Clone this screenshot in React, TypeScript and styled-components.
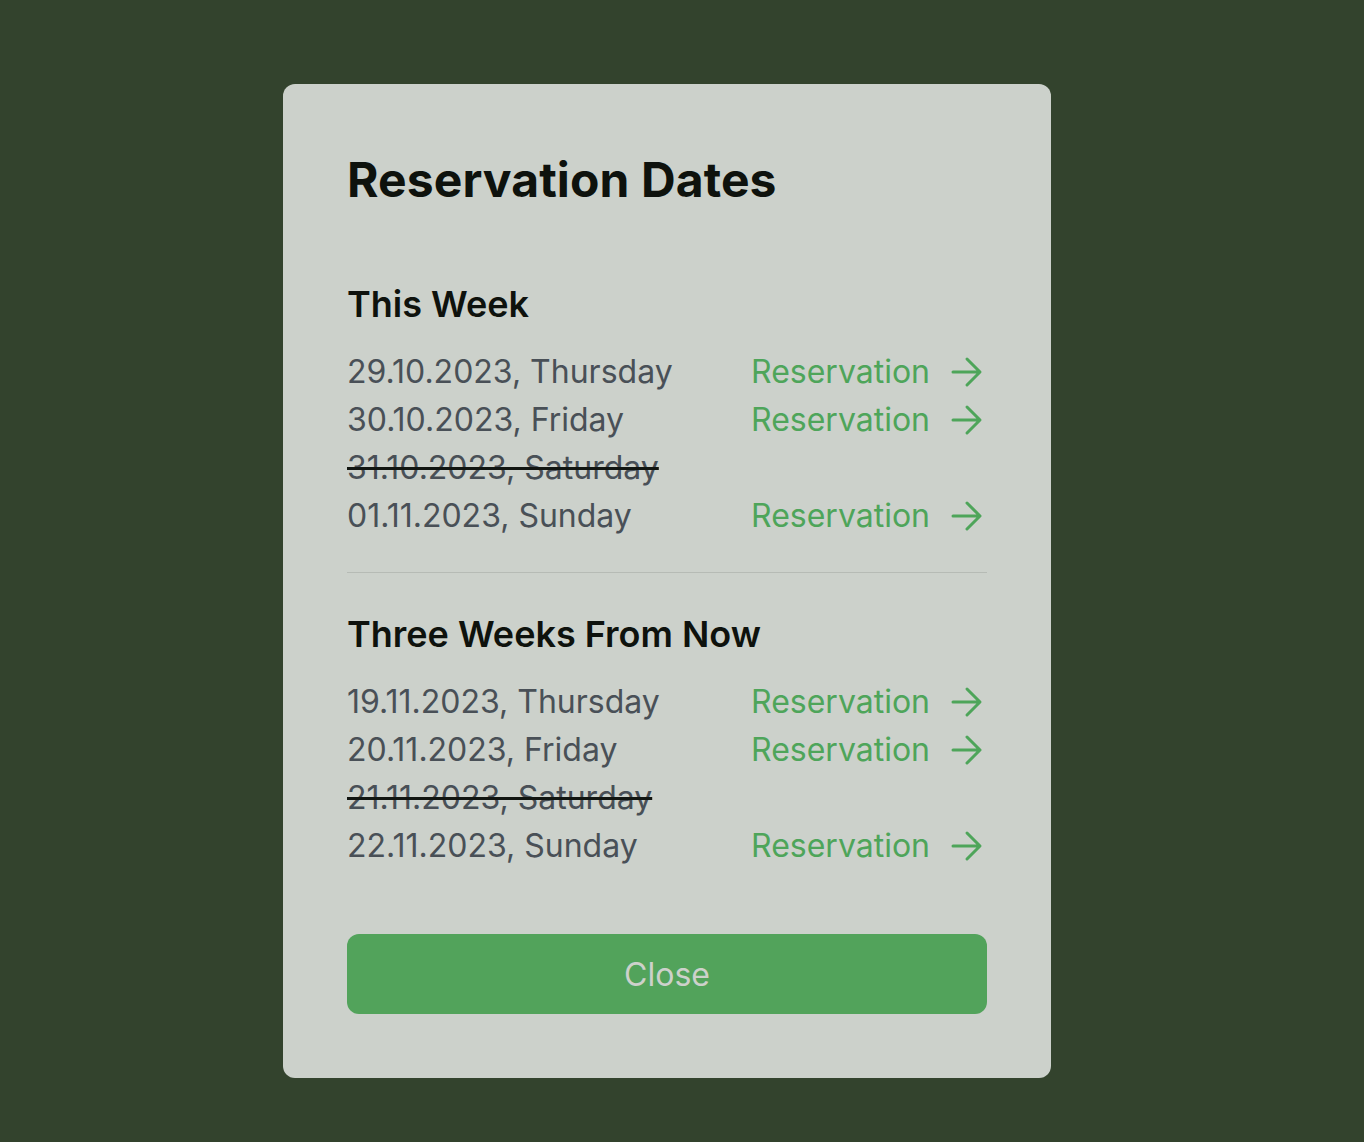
import React from 'react'
import styled, { createGlobalStyle } from 'styled-components'

const GlobalStyle = createGlobalStyle`
    html, body {
        margin: 0;
        padding: 0;
        background: #33432d;
    }
    body {
        font-family: Inter, 'Noto Sans', sans-serif;
    }
`

interface DateRow {
    date: string
    unavailable?: boolean
}

interface Week {
    title: string
    days: DateRow[]
}

const weeks: Week[] = [
    {
        title: 'This Week',
        days: [
            { date: '29.10.2023, Thursday' },
            { date: '30.10.2023, Friday' },
            { date: '31.10.2023, Saturday', unavailable: true },
            { date: '01.11.2023, Sunday' },
        ],
    },
    {
        title: 'Three Weeks From Now',
        days: [
            { date: '19.11.2023, Thursday' },
            { date: '20.11.2023, Friday' },
            { date: '21.11.2023, Saturday', unavailable: true },
            { date: '22.11.2023, Sunday' },
        ],
    },
]

const Page = styled.div`
    min-height: 100vh;
    box-sizing: border-box;
    display: flex;
    justify-content: center;
    align-items: flex-start;
    padding: 84px 30px 64px 0;
`

const Card = styled.div`
    width: 768px;
    box-sizing: border-box;
    padding: 64px;
    background: #ccd1cb;
    border-radius: 12px;
    display: flex;
    flex-direction: column;
`

const Title = styled.h1`
    margin: 0 0 31px;
    font-size: 48px;
    line-height: 64px;
    font-weight: 700;
    letter-spacing: 0.1px;
    color: #0e120d;
`

const Section = styled.section<{ $divider?: boolean }>`
    padding: 39px 0 32px;
    border-bottom: ${({ $divider }) => ($divider ? '1px solid #b6bbb5' : 'none')};
`

const SectionTitle = styled.h2`
    margin: 0 0 22px;
    font-size: 36px;
    line-height: 44px;
    font-weight: 600;
    color: #0e120d;
`

const Row = styled.div`
    display: flex;
    justify-content: space-between;
    align-items: center;
    height: 48px;
`

const DateText = styled.span<{ $struck?: boolean }>`
    font-size: 32px;
    line-height: 48px;
    color: #495057;
    text-decoration: ${({ $struck }) => ($struck ? 'line-through' : 'none')};
    text-decoration-color: #111511;
    text-decoration-thickness: 3px;
`

const ReserveLink = styled.a`
    display: flex;
    align-items: center;
    gap: 21px;
    padding-right: 4px;
    font-size: 32px;
    line-height: 48px;
    color: #4ea55a;
    text-decoration: none;
    cursor: pointer;
`

const CloseButton = styled.button`
    margin-top: 32px;
    height: 80px;
    border: none;
    border-radius: 12px;
    background: #52a35b;
    color: #cdd1cb;
    font-family: inherit;
    font-size: 32px;
    cursor: pointer;
`

const Arrow = () => (
    <svg width="32" height="32" viewBox="0 0 32 32" fill="none" stroke="currentColor" strokeWidth="3" strokeLinecap="round" strokeLinejoin="round">
        <path d="M2 16h26M16 3l13 13-13 13" />
    </svg>
)

export default function App() {
    return (
        <>
            <GlobalStyle />
            <Page>
                <Card>
                    <Title>Reservation Dates</Title>
                    {weeks.map((week, i) => (
                        <Section key={week.title} $divider={i < weeks.length - 1}>
                            <SectionTitle>{week.title}</SectionTitle>
                            {week.days.map((day) => (
                                <Row key={day.date}>
                                    <DateText $struck={day.unavailable}>{day.date}</DateText>
                                    {!day.unavailable && (
                                        <ReserveLink>
                                            Reservation
                                            <Arrow />
                                        </ReserveLink>
                                    )}
                                </Row>
                            ))}
                        </Section>
                    ))}
                    <CloseButton>Close</CloseButton>
                </Card>
            </Page>
        </>
    )
}
